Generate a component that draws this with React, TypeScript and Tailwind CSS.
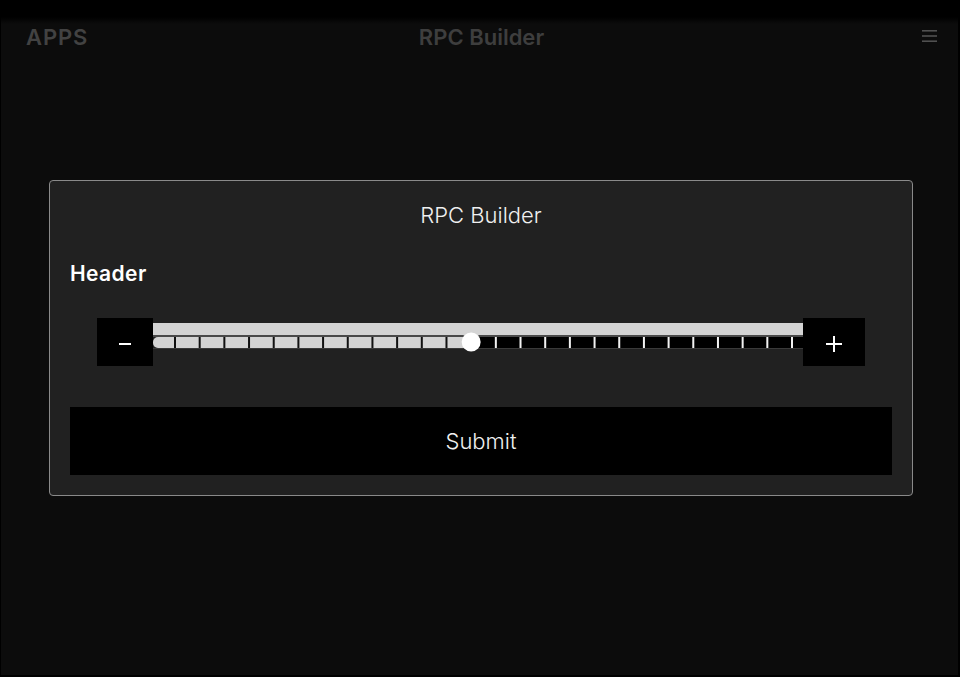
import { useState } from "react";

const TRACK_W = 650;
const TICKS = Array.from({ length: 26 }, (_, i) => 22 + i * 24.68);

const Slider = ({ value }: { value: number }) => {
  const thumbX = TICKS[value];
  return (
    <svg width={TRACK_W} height={48} viewBox={`0 0 ${TRACK_W} 48`} className="block shrink-0">
      {/* upper bar */}
      <rect x={0} y={5} width={TRACK_W} height={12} fill="#d4d4d4" />
      <rect x={0} y={17} width={TRACK_W} height={2} fill="#4a4a4a" />
      {/* lower tick row */}
      <rect x={thumbX} y={19} width={TRACK_W - thumbX} height={11} fill="#000" />
      <rect x={0} y={19} width={thumbX} height={11} rx={5} fill="#d4d4d4" />
      <rect x={6} y={19} width={thumbX - 6} height={11} fill="#d4d4d4" />
      <rect x={0} y={30} width={TRACK_W} height={1} fill="#3a3a3a" />
      {TICKS.map((t, i) =>
        t < thumbX ? (
          <rect key={i} x={t - 1} y={19} width={2} height={11} fill="#111" />
        ) : (
          <rect key={i} x={t - 1} y={19} width={2} height={11} fill="#f2f2f2" />
        )
      )}
      {/* thumb */}
      <circle cx={thumbX} cy={24} r={9.5} fill="#fff" />
    </svg>
  );
};

export default function App() {
  const [value, setValue] = useState(12);

  return (
    <div className="h-[677px] w-[960px] bg-black" style={{ fontFamily: "Inter, 'Noto Sans', sans-serif" }}>
      <div className="ml-px mr-[2px] h-[675px] bg-[linear-gradient(to_bottom,#000_17px,#0c0c0c_24px)]">
        {/* Top bar */}
        <header className="flex h-[72px] items-center justify-between pl-[25px] pr-[21px] pt-[3px]">
          <span className="w-[120px] text-[22px] font-semibold tracking-[0.04em] text-[#424242]">APPS</span>
          <span className="text-[22px] font-semibold text-[#3e3e3e]">RPC Builder</span>
          <div className="flex w-[120px] justify-end">
            <svg width="15" height="14" viewBox="0 0 15 14" className="-mt-[3px]">
              <rect x="0" y="1" width="15" height="1.6" fill="#505050" />
              <rect x="0" y="6.2" width="15" height="1.6" fill="#505050" />
              <rect x="0" y="11.4" width="15" height="1.6" fill="#505050" />
            </svg>
          </div>
        </header>

        <main className="pt-[108px]">
          <div className="ml-[48px] w-[864px] rounded-[4px] border border-[#8a8a8a] bg-[#212121] px-5 pt-[18px] pb-5">
            <h1 className="text-center text-[22px] leading-[33px] font-light text-[#f0f0f0]">RPC Builder</h1>

            <h2 className="mt-[28px] text-[21px] leading-[28px] font-semibold tracking-[0.02em] text-white">Header</h2>

            <div className="mt-[30px] flex h-[48px] items-stretch px-[27px]">
              <button
                className="flex w-[56px] shrink-0 items-center justify-center bg-black"
                onClick={() => setValue((v) => Math.max(0, v - 1))}
              >
                <span className="mt-[3px] block h-[2px] w-[12px] bg-white" />
              </button>
              <Slider value={value} />
              <button
                className="flex w-[62px] shrink-0 items-center justify-center bg-black"
                onClick={() => setValue((v) => Math.min(TICKS.length - 1, v + 1))}
              >
                <svg width="16" height="16" viewBox="0 0 16 16" className="mt-[4px]">
                  <rect x="0" y="7" width="16" height="2" fill="#fff" />
                  <rect x="7" y="0" width="2" height="16" fill="#fff" />
                </svg>
              </button>
            </div>

            <button className="mt-[41px] flex h-[68px] w-full items-center justify-center bg-black text-[22px] font-light text-[#f0f0f0]">
              Submit
            </button>
          </div>
        </main>
      </div>
    </div>
  );
}
